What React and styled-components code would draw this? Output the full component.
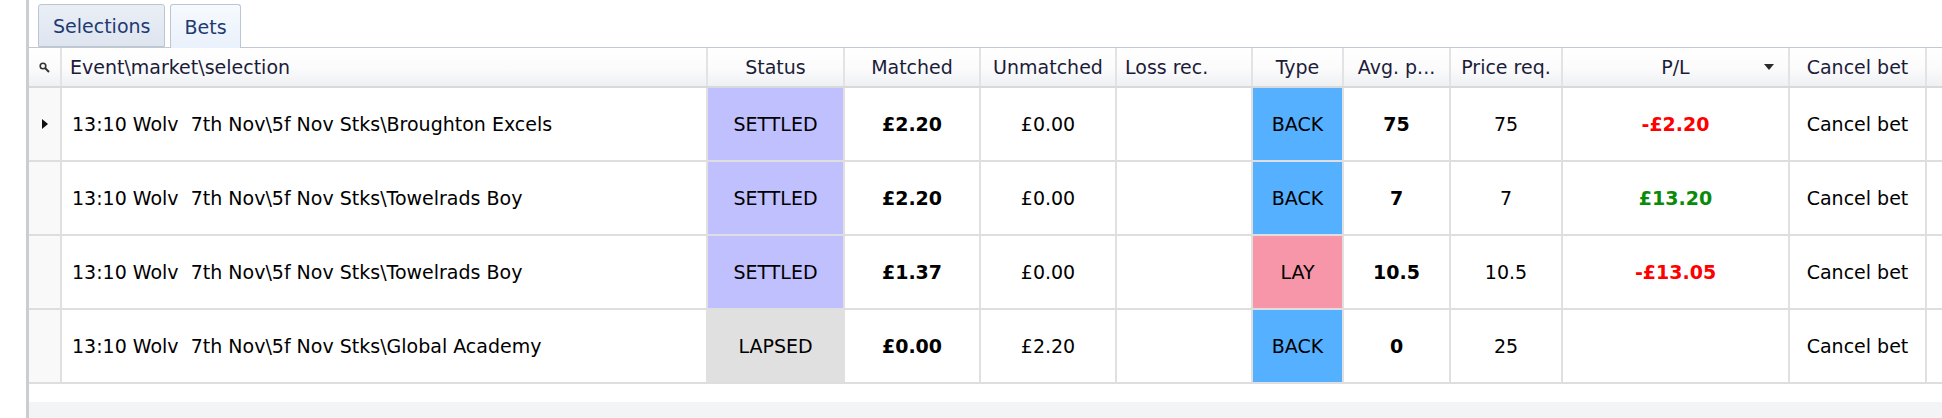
import React from "react";
import styled, { createGlobalStyle } from "styled-components";

const GlobalStyle = createGlobalStyle`
  html, body {
    margin: 0;
    padding: 0;
    background: #ffffff;
  }
  body {
    font-family: "DejaVu Sans", "Liberation Sans", sans-serif;
    font-size: 19px;
  }
  * {
    box-sizing: border-box;
  }
`;

// column widths, taken from the grid lines of the screenshot
const COLUMNS = "33px 646px 137px 136px 136px 136px 91px 107px 112px 227px 137px 1fr";

const bets = [
  {
    selection: "13:10 Wolv  7th Nov\\5f Nov Stks\\Broughton Excels",
    status: "SETTLED",
    matched: "£2.20",
    unmatched: "£0.00",
    type: "BACK",
    avg: "75",
    req: "75",
    pl: "-£2.20",
    current: true,
  },
  {
    selection: "13:10 Wolv  7th Nov\\5f Nov Stks\\Towelrads Boy",
    status: "SETTLED",
    matched: "£2.20",
    unmatched: "£0.00",
    type: "BACK",
    avg: "7",
    req: "7",
    pl: "£13.20",
  },
  {
    selection: "13:10 Wolv  7th Nov\\5f Nov Stks\\Towelrads Boy",
    status: "SETTLED",
    matched: "£1.37",
    unmatched: "£0.00",
    type: "LAY",
    avg: "10.5",
    req: "10.5",
    pl: "-£13.05",
  },
  {
    selection: "13:10 Wolv  7th Nov\\5f Nov Stks\\Global Academy",
    status: "LAPSED",
    matched: "£0.00",
    unmatched: "£2.20",
    type: "BACK",
    avg: "0",
    req: "25",
    pl: "",
  },
];

const statusColors = { SETTLED: "#c0c0ff", LAPSED: "#e0e0e0" };
const typeColors = { BACK: "#55b1ff", LAY: "#f896a9" };

export default function App() {
  return (
    <>
      <GlobalStyle />
      <Page>
        <Panel>
          <TabBar>
            <Tab>Selections</Tab>
            <Tab $active>Bets</Tab>
          </TabBar>

          <HeaderRow>
            <HeadCell $align="center">
              <SearchIcon />
            </HeadCell>
            <HeadCell>Event\market\selection</HeadCell>
            <HeadCell $align="center">Status</HeadCell>
            <HeadCell $align="center">Matched</HeadCell>
            <HeadCell $align="center">Unmatched</HeadCell>
            <HeadCell>Loss rec.</HeadCell>
            <HeadCell $align="center">Type</HeadCell>
            <HeadCell $align="center">Avg. p...</HeadCell>
            <HeadCell $align="center">Price req.</HeadCell>
            <HeadCell $align="center">
              <SortLabel>P/L</SortLabel>
              <SortArrow />
            </HeadCell>
            <HeadCell $align="center">Cancel bet</HeadCell>
            <HeadCell $last />
          </HeaderRow>

          {bets.map((bet, i) => (
            <Row key={i}>
              <Indicator>{bet.current && <RowArrow />}</Indicator>
              <Cell>{bet.selection}</Cell>
              <Cell $align="center" $bg={statusColors[bet.status]}>
                {bet.status}
              </Cell>
              <Cell $align="center" $bold>
                {bet.matched}
              </Cell>
              <Cell $align="center">{bet.unmatched}</Cell>
              <Cell />
              <Cell $align="center" $bg={typeColors[bet.type]}>
                {bet.type}
              </Cell>
              <Cell $align="center" $bold>
                {bet.avg}
              </Cell>
              <Cell $align="center">{bet.req}</Cell>
              <Cell
                $align="center"
                $bold
                $color={bet.pl.startsWith("-") ? "#ff0000" : "#0a8a0a"}
              >
                {bet.pl}
              </Cell>
              <Cell $align="center">Cancel bet</Cell>
              <Cell $last />
            </Row>
          ))}

          <Footer />
        </Panel>
      </Page>
    </>
  );
}

function SearchIcon() {
  return (
    <svg width="11" height="11" viewBox="0 0 11 11">
      <circle cx="4" cy="4" r="2.8" fill="none" stroke="#333" strokeWidth="1.6" />
      <path d="M6 6 L10 10" stroke="#333" strokeWidth="2" />
    </svg>
  );
}

function SortArrow() {
  return (
    <ArrowBox>
      <svg width="10" height="6" viewBox="0 0 10 6">
        <polygon points="0,0 10,0 5,6" fill="#2b2b2b" />
      </svg>
    </ArrowBox>
  );
}

function RowArrow() {
  return (
    <svg width="6" height="10" viewBox="0 0 6 10">
      <polygon points="0,0 6,5 0,10" fill="#111" />
    </svg>
  );
}

// Styled components ----------------
const Page = styled.div`
  display: flex;
  width: 1942px;
  height: 418px;
  padding-left: 26px;
  overflow: hidden;
`;

const Panel = styled.div`
  flex: 1;
  display: flex;
  flex-direction: column;
  border-left: 3px solid #c9cdd4;
  min-width: 0;
`;

const TabBar = styled.div`
  display: flex;
  align-items: flex-end;
  gap: 5px;
  height: 48px;
  padding: 4px 0 0 9px;
  border-bottom: 1px solid #c2c8d2;
`;

const Tab = styled.div`
  height: ${(p) => (p.$active ? "44px" : "43px")};
  margin-bottom: ${(p) => (p.$active ? "-1px" : "0")};
  display: flex;
  align-items: center;
  padding: 0 ${(p) => (p.$active ? "13px" : "14px")};
  border: 1px solid #bcc6d3;
  border-bottom: ${(p) => (p.$active ? "none" : "1px solid #bcc6d3")};
  border-radius: 3px 3px 0 0;
  background: ${(p) =>
    p.$active
      ? "linear-gradient(#f7fafe, #e9f1fc)"
      : "linear-gradient(#eaeff6, #dee5ef)"};
  color: #1f3a72;
`;

const HeaderRow = styled.div`
  display: grid;
  grid-template-columns: ${COLUMNS};
  height: 40px;
  border-bottom: 2px solid #d9d9d9;
  background: linear-gradient(#ffffff 0%, #fbfbfc 55%, #eef0f3 100%);
`;

const HeadCell = styled.div`
  display: flex;
  align-items: center;
  justify-content: ${(p) => (p.$align === "center" ? "center" : "flex-start")};
  padding: 0 8px;
  border-right: ${(p) => (p.$last ? "none" : "2px solid #e2e3e6")};
  color: #1c1c3a;
  white-space: pre;
  overflow: hidden;
  position: relative;
`;

const SortLabel = styled.span`
  display: block;
`;

const ArrowBox = styled.span`
  position: absolute;
  right: 14px;
  top: 16px;
  display: flex;
`;

const Row = styled.div`
  display: grid;
  grid-template-columns: ${COLUMNS};
  height: 74px;
  border-bottom: 2px solid #dedede;
`;

const Indicator = styled.div`
  display: flex;
  align-items: center;
  justify-content: center;
  background: #f9f9fa;
  border-right: 2px solid #e0e0e0;
`;

const Cell = styled.div`
  display: flex;
  align-items: center;
  justify-content: ${(p) => (p.$align === "center" ? "center" : "flex-start")};
  padding: 0 10px;
  background: ${(p) => p.$bg || "#ffffff"};
  border-right: ${(p) => (p.$last ? "none" : "2px solid #e0e0e0")};
  color: ${(p) => p.$color || "#000000"};
  font-weight: ${(p) => (p.$bold ? "bold" : "normal")};
  white-space: pre;
  overflow: hidden;
`;

const Footer = styled.div`
  flex: 1;
  margin-top: 18px;
  background: #f3f4f6;
`;
// Styled components end ----------------
